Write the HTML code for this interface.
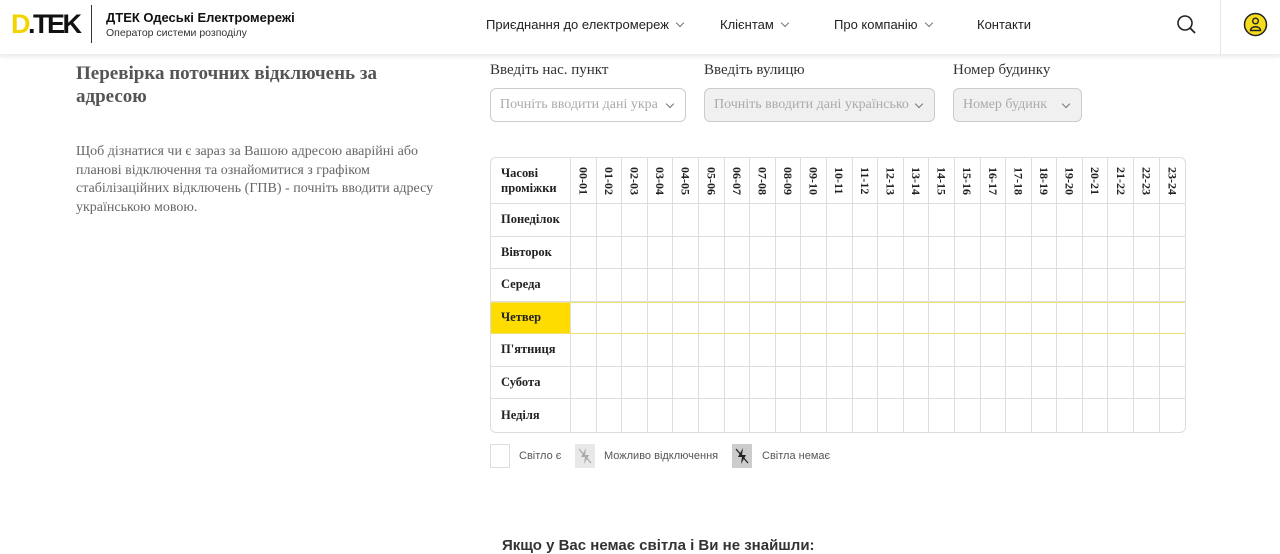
<!DOCTYPE html>
<html><head><meta charset="utf-8"><style>
*{box-sizing:border-box;margin:0;padding:0}
body{width:1280px;height:544px;overflow:hidden;background:#fff;font-family:"Liberation Sans",sans-serif;position:relative;color:#222}
.hdr{position:absolute;left:0;top:0;width:1280px;height:55px;background:#fff;box-shadow:0 2px 4px rgba(0,0,0,.08);border-bottom:1px solid #eee}
.a{position:absolute}
.nav{font-size:13px;color:#222;top:17px}
.chev{display:inline-block;width:6px;height:6px;border-right:1px solid #777;border-bottom:1px solid #777;transform:rotate(45deg);margin-left:8px;position:relative;top:-3px}
.serif{font-family:"Liberation Serif",serif}
.inp{position:absolute;top:88px;height:34px;border:1px solid #ccc;border-radius:6px;font-family:"Liberation Serif",serif;font-size:14px;color:#aaa;padding:8px 9px;white-space:nowrap;overflow:hidden}
.inp.d{background:#f0f0f0}
.inp .chev{position:absolute;right:12px;top:12px}
.lbl{position:absolute;top:62px;font-family:"Liberation Serif",serif;font-size:15px;color:#333}
table{position:absolute;left:490px;top:157px;border-collapse:separate;border-spacing:0;border:1px solid #ddd;border-radius:6px;font-family:"Liberation Serif",serif;font-weight:bold;font-size:12.5px;color:#222}
td{border-right:1px solid #ddd;border-bottom:1px solid #ddd;width:25.6px;height:32.5px;padding:0}
td:last-child{border-right:none}
tr:last-child td{border-bottom:none}
td.f{width:80px;padding-left:10px}
tr.h td{height:46px}
.v{writing-mode:vertical-rl;font-size:12px;display:block;margin:auto;line-height:1}
tr.y td{border-top:1px solid #f3e06a;border-bottom:1px solid #f3e06a}
tr.y td.f{background:#ffdc00}
.lg{position:absolute;top:444px;width:20px;height:24px;border:1px solid #ddd}
.lt{position:absolute;top:450px;font-size:11px;color:#555}
</style></head><body>
<div class="hdr">
 <div class="a" style="left:11px;top:11px;font-size:27px;font-weight:bold;letter-spacing:-2.5px;color:#111;line-height:27px"><span style="color:#f4d400">D</span>.TEK</div>
 <div class="a" style="left:91px;top:5px;width:1px;height:38px;background:#333"></div>
 <div class="a" style="left:106px;top:10px;font-size:13px;font-weight:bold;color:#111">ДТЕК Одеські Електромережі</div>
 <div class="a" style="left:106px;top:27px;font-size:10.5px;color:#333">Оператор системи розподілу</div>
 <div class="a nav" style="left:486px">Приєднання до електромереж<span class="chev"></span></div>
 <div class="a nav" style="left:720px">Клієнтам<span class="chev"></span></div>
 <div class="a nav" style="left:834px">Про компанію<span class="chev"></span></div>
 <div class="a nav" style="left:977px">Контакти</div>
 <svg class="a" style="left:1175px;top:13px" width="24" height="24" viewBox="0 0 24 24"><circle cx="10" cy="10" r="7" fill="none" stroke="#222" stroke-width="1.6"/><path d="M15 15l5 5" stroke="#222" stroke-width="1.8"/></svg>
 <div class="a" style="left:1220px;top:0;width:1px;height:55px;background:#e5e5e5"></div>
 <svg class="a" style="left:1243px;top:12px" width="25" height="25" viewBox="0 0 25 25"><circle cx="12.5" cy="12.5" r="11" fill="#f7dc1c" stroke="#222" stroke-width="1.5"/><circle cx="12.5" cy="9" r="2.8" fill="none" stroke="#222" stroke-width="1.4"/><path d="M7.5 18.5c0-5 10-5 10 0z" fill="none" stroke="#222" stroke-width="1.4"/></svg>
</div>
<div class="a serif" style="left:76px;top:62px;font-size:19px;font-weight:bold;color:#555;line-height:23px;width:340px">Перевірка поточних відключень за адресою</div>
<div class="a serif" style="left:76px;top:143px;font-size:14px;color:#666;line-height:18.5px;width:380px">Щоб дізнатися чи є зараз за Вашою адресою аварійні або планові відключення та ознайомитися з графіком стабілізаційних відключень (ГПВ) - почніть вводити адресу українською мовою.</div>
<div class="lbl" style="left:490px">Введіть нас. пункт</div>
<div class="lbl" style="left:704px">Введіть вулицю</div>
<div class="lbl" style="left:953px">Номер будинку</div>
<div class="inp" style="left:490px;width:196px">Почніть вводити дані укра<span class="chev"></span></div>
<div class="inp d" style="left:704px;width:231px">Почніть вводити дані українсько<span class="chev"></span></div>
<div class="inp d" style="left:953px;width:129px">Номер будинк<span class="chev"></span></div>
<table>
<tr class="h"><td class="f">Часові<br>проміжки</td>
<td><span class="v">00-01</span></td><td><span class="v">01-02</span></td><td><span class="v">02-03</span></td><td><span class="v">03-04</span></td><td><span class="v">04-05</span></td><td><span class="v">05-06</span></td><td><span class="v">06-07</span></td><td><span class="v">07-08</span></td><td><span class="v">08-09</span></td><td><span class="v">09-10</span></td><td><span class="v">10-11</span></td><td><span class="v">11-12</span></td><td><span class="v">12-13</span></td><td><span class="v">13-14</span></td><td><span class="v">14-15</span></td><td><span class="v">15-16</span></td><td><span class="v">16-17</span></td><td><span class="v">17-18</span></td><td><span class="v">18-19</span></td><td><span class="v">19-20</span></td><td><span class="v">20-21</span></td><td><span class="v">21-22</span></td><td><span class="v">22-23</span></td><td><span class="v">23-24</span></td></tr>
<tr><td class="f">Понеділок</td><td></td><td></td><td></td><td></td><td></td><td></td><td></td><td></td><td></td><td></td><td></td><td></td><td></td><td></td><td></td><td></td><td></td><td></td><td></td><td></td><td></td><td></td><td></td><td></td></tr>
<tr><td class="f">Вівторок</td><td></td><td></td><td></td><td></td><td></td><td></td><td></td><td></td><td></td><td></td><td></td><td></td><td></td><td></td><td></td><td></td><td></td><td></td><td></td><td></td><td></td><td></td><td></td><td></td></tr>
<tr><td class="f">Середа</td><td></td><td></td><td></td><td></td><td></td><td></td><td></td><td></td><td></td><td></td><td></td><td></td><td></td><td></td><td></td><td></td><td></td><td></td><td></td><td></td><td></td><td></td><td></td><td></td></tr>
<tr class="y"><td class="f">Четвер</td><td></td><td></td><td></td><td></td><td></td><td></td><td></td><td></td><td></td><td></td><td></td><td></td><td></td><td></td><td></td><td></td><td></td><td></td><td></td><td></td><td></td><td></td><td></td><td></td></tr>
<tr><td class="f">П'ятниця</td><td></td><td></td><td></td><td></td><td></td><td></td><td></td><td></td><td></td><td></td><td></td><td></td><td></td><td></td><td></td><td></td><td></td><td></td><td></td><td></td><td></td><td></td><td></td><td></td></tr>
<tr><td class="f">Субота</td><td></td><td></td><td></td><td></td><td></td><td></td><td></td><td></td><td></td><td></td><td></td><td></td><td></td><td></td><td></td><td></td><td></td><td></td><td></td><td></td><td></td><td></td><td></td><td></td></tr>
<tr><td class="f">Неділя</td><td></td><td></td><td></td><td></td><td></td><td></td><td></td><td></td><td></td><td></td><td></td><td></td><td></td><td></td><td></td><td></td><td></td><td></td><td></td><td></td><td></td><td></td><td></td><td></td></tr>
</table>
<div class="lg" style="left:490px"></div><div class="lt" style="left:519px">Світло є</div>
<div class="lg" style="left:575px;background:#e8e8e8;border:none"><svg width="20" height="24" viewBox="0 0 20 24"><path d="M11 4L6 13h4l-1 7 5-9h-4z" fill="#aaa"/><path d="M4 5l12 14" stroke="#aaa" stroke-width="1.3"/></svg></div><div class="lt" style="left:604px">Можливо відключення</div>
<div class="lg" style="left:732px;background:#ccc;border:none"><svg width="20" height="24" viewBox="0 0 20 24"><path d="M11 4L6 13h4l-1 7 5-9h-4z" fill="#222"/><path d="M4 5l12 14" stroke="#222" stroke-width="1.3"/></svg></div><div class="lt" style="left:762px">Світла немає</div>
<div class="a" style="left:502px;top:537px;font-size:15px;font-weight:bold;color:#333">Якщо у Вас немає світла і Ви не знайшли:</div>
</body></html>
